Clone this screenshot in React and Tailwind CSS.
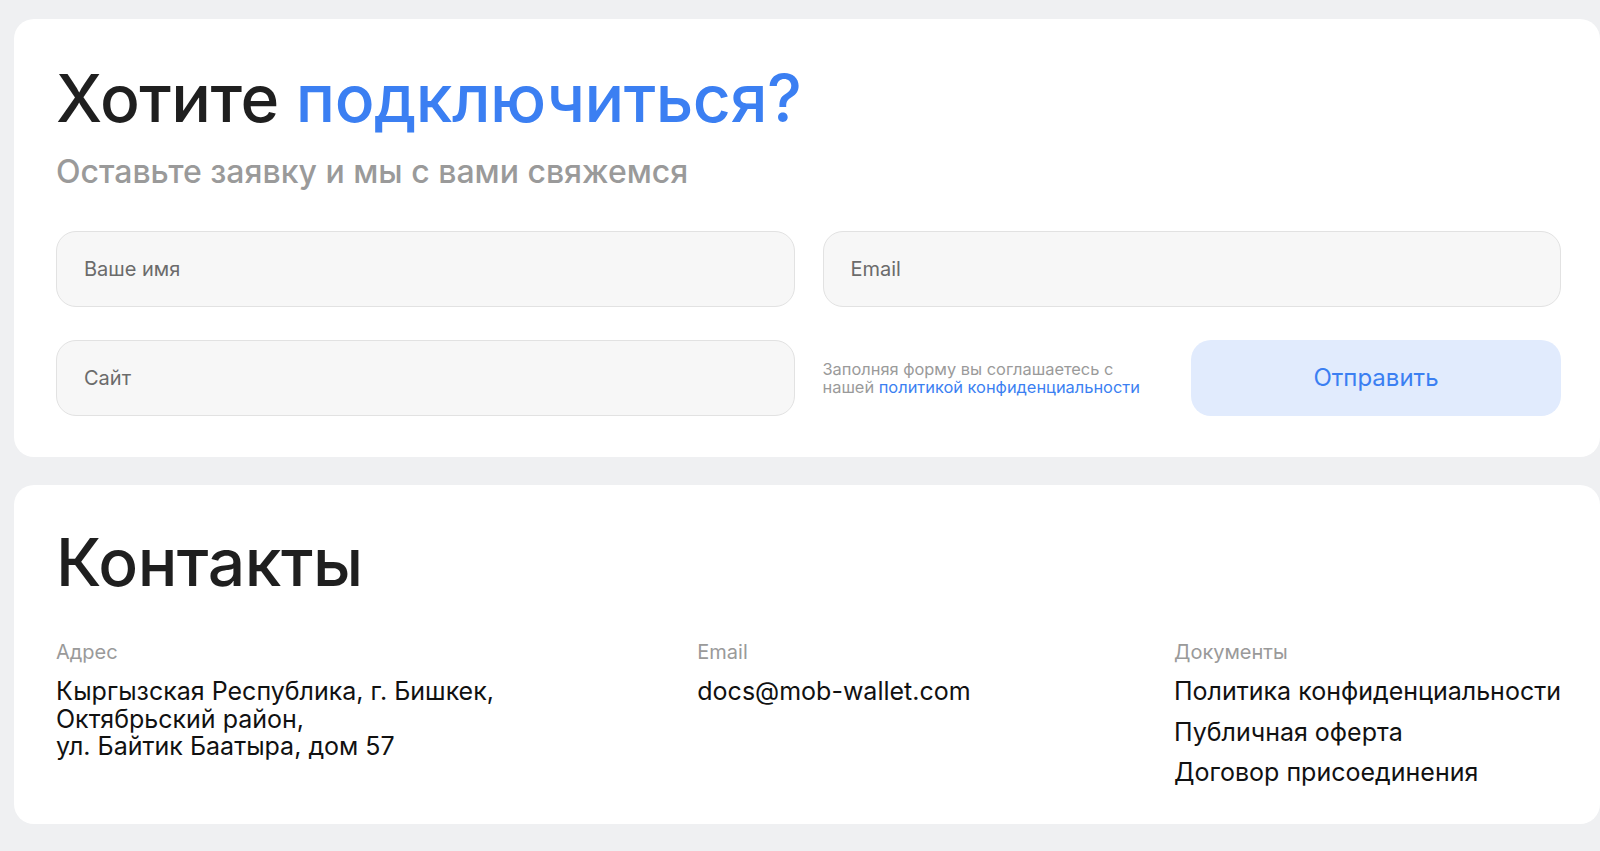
import React from "react";

const docs = ["Политика конфиденциальности", "Публичная оферта", "Договор присоединения"];

const Field = ({ placeholder }) => (
    <input
        type="text"
        placeholder={placeholder}
        className="h-[76px] w-full rounded-[20px] border border-[#e2e2e2] bg-[#f7f7f7] px-[27px] text-[20px] text-[#222] placeholder:text-[#6b6b6b] outline-none"
    />
);

const App = () => {
    return (
        <div className="min-h-screen bg-[#eff0f2] pl-[14px] pt-[19px] pb-[26px] font-['Inter',sans-serif]">
            <div className="flex flex-col gap-[28px]">
                {/* Request form */}
                <section className="rounded-[20px] bg-white pl-[42px] pr-[39px] pt-[46px] pb-[41px]">
                    <h1 className="text-[66px] font-medium leading-none tracking-[-0.5px] text-[#1f1f1f]">
                        Хотите <span className="text-[#3b7ff2]">подключиться?</span>
                    </h1>
                    <p className="mt-[25px] text-[32px] font-medium leading-none text-[#9a9a9a]">
                        Оставьте заявку и мы с вами свяжемся
                    </p>
                    <form className="mt-[43px] grid grid-cols-2 gap-x-[28px] gap-y-[33px]" onSubmit={(e) => e.preventDefault()}>
                        <Field placeholder="Ваше имя" />
                        <Field placeholder="Email" />
                        <Field placeholder="Сайт" />
                        <div className="flex items-center justify-between gap-4">
                            <p className="text-[16.4px] leading-[18.5px] text-[#9a9a9a]">
                                Заполняя форму вы соглашаетесь с
                                <br />
                                нашей <a href="#" className="text-[#3b7ff2]">политикой конфиденциальности</a>
                            </p>
                            <button
                                type="submit"
                                className="h-[76px] w-[370px] shrink-0 rounded-[20px] bg-[#e1ebfd] text-[24px] text-[#3b7ff2]"
                            >
                                Отправить
                            </button>
                        </div>
                    </form>
                </section>

                {/* Contacts */}
                <section className="rounded-[20px] bg-white pl-[42px] pr-[39px] pt-[44px] pb-[37px]">
                    <h2 className="text-[66px] font-medium leading-none tracking-[-0.5px] text-[#1f1f1f]">Контакты</h2>
                    <div className="mt-[47px] flex justify-between">
                        <div>
                            <div className="text-[20px] leading-none text-[#9a9a9a]">Адрес</div>
                            <p className="mt-[16px] text-[25px] leading-[27.5px] text-[#111]">
                                Кыргызская Республика, г. Бишкек,
                                <br />
                                Октябрьский район,
                                <br />
                                ул. Байтик Баатыра, дом 57
                            </p>
                        </div>
                        <div>
                            <div className="text-[20px] leading-none text-[#9a9a9a]">Email</div>
                            <a href="#" className="mt-[16px] block text-[25px] leading-[27.5px] text-[#111]">
                                docs@mob-wallet.com
                            </a>
                        </div>
                        <div>
                            <div className="text-[20px] leading-none text-[#9a9a9a]">Документы</div>
                            <ul className="mt-[16px] flex flex-col gap-[13px] text-[25px] leading-[27.5px]">
                                {docs.map((d) => (
                                    <li key={d}>
                                        <a href="#" className="block text-[#111]">{d}</a>
                                    </li>
                                ))}
                            </ul>
                        </div>
                    </div>
                </section>
            </div>
        </div>
    );
};

export default App;
